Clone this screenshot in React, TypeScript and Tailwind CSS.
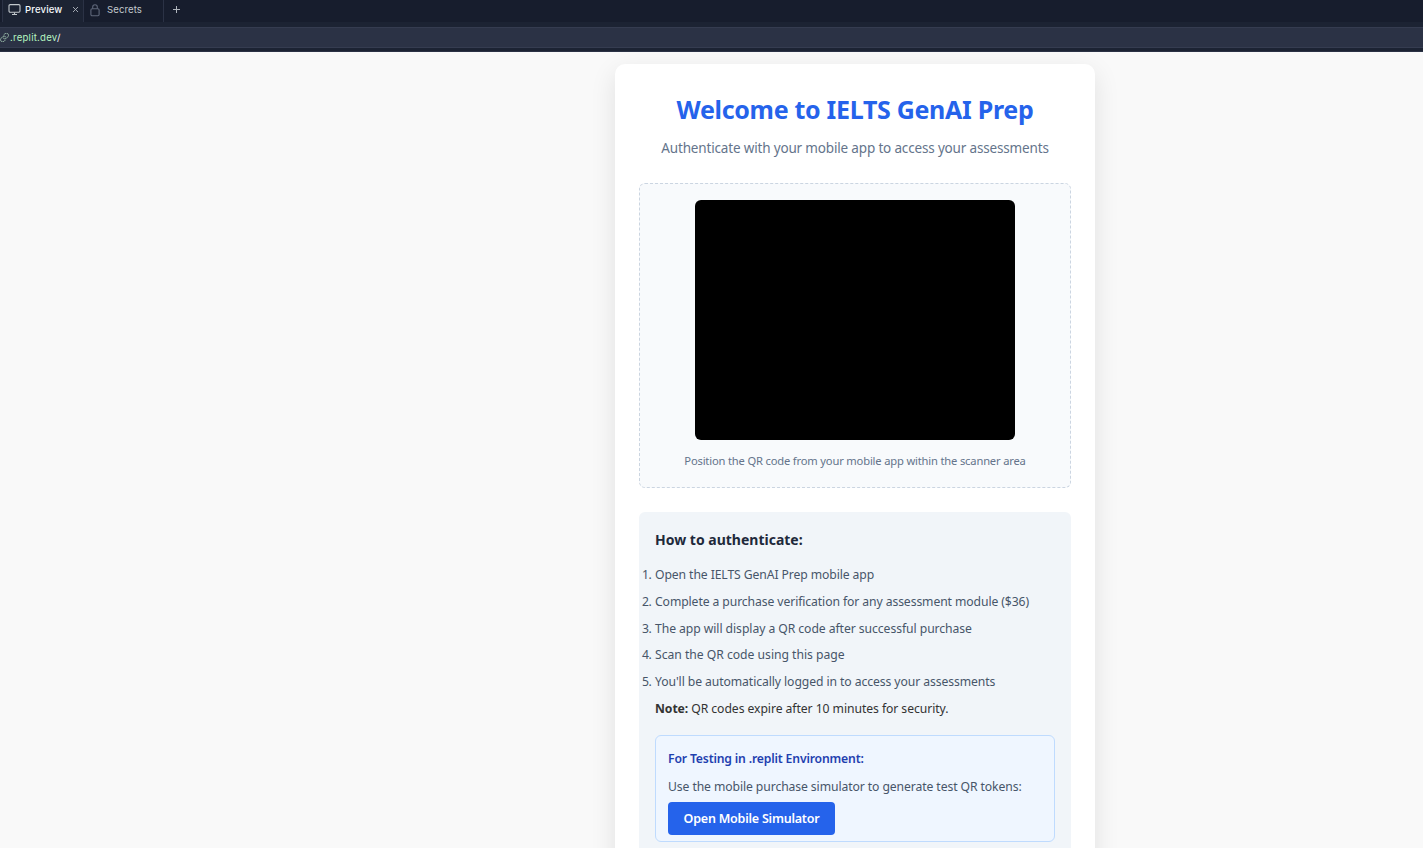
import React from "react";

const steps = [
  { text: "Open the IELTS GenAI Prep mobile app", tracking: "tracking-[-0.1px]" },
  { text: "Complete a purchase verification for any assessment module ($36)", tracking: "tracking-[-0.1px]" },
  { text: "The app will display a QR code after successful purchase", tracking: "tracking-[-0.07px]" },
  { text: "Scan the QR code using this page", tracking: "tracking-[-0.03px]" },
  { text: "You'll be automatically logged in to access your assessments", tracking: "tracking-[-0.09px]" },
];

function TabBar() {
  return (
    <div className="flex h-[22px] items-stretch bg-[#171d2d] pl-[2px] font-[Inter,'Liberation_Sans',sans-serif] text-[9.6px]">
      <div className="flex w-[82px] items-center border-x border-[#2b3245] bg-[#1c2333] pb-[2px] pl-[5px] text-[#f5f9fc]">
        <svg width="13" height="12" viewBox="0 0 13 12" fill="none" stroke="#c2c8cc" strokeWidth="1.1" className="shrink-0">
          <rect x="1" y="0.600" width="11" height="7.700" rx="1.2" />
          <path d="M6.5 8.5v2M4 10.5h5" />
        </svg>
        <span className="ml-[4px] w-[38px] font-medium tracking-[0.12px]">Preview</span>
        <svg width="7" height="7" viewBox="0 0 7 7" stroke="#b0b6bd" strokeWidth="0.9" className="ml-[9px] shrink-0 -translate-y-px">
          <path d="M1 1l5 5M6 1l-5 5" />
        </svg>
      </div>
      <div className="flex w-[80px] items-center border-r border-[#2b3245] pb-[2px] pl-[6px] text-[#c2c8cc]">
        <svg width="10" height="13" viewBox="0 0 10 13" fill="none" stroke="#5f677a" strokeWidth="1.1" className="shrink-0">
          <rect x="0.9" y="4.700" width="8.2" height="7" rx="1.2" />
          <path d="M2.7 4.700V3a2.3 2.3 0 0 1 4.6 0v1.700" />
        </svg>
        <span className="ml-[7px] tracking-[0.080px]">Secrets</span>
      </div>
      <div className="flex items-center pb-[3px] pl-[8px]">
        <svg width="9" height="9" viewBox="0 0 9 9" stroke="#b0b6bd" strokeWidth="1">
          <path d="M4.5 1v7M1 4.5h7" />
        </svg>
      </div>
    </div>
  );
}

function AddressBar() {
  return (
    <div className="h-[30px] bg-[#1c2333] pt-[5px]">
      <div className="flex h-[21px] items-center border-y border-[#353c50] bg-[#2b3245] font-[Inter,'Liberation_Sans',sans-serif] text-[9.6px] text-[#b5f5c0]">
        <svg width="9" height="9" viewBox="0 0 24 24" fill="none" stroke="#8fae9f" strokeWidth="2.6" strokeLinecap="round" className="shrink-0">
          <path d="M9 14a5.500 5.500 0 0 0 8 0l4-4a5.500 5.500 0 0 0-8-8l-3 3" />
          <path d="M15 10a5.500 5.500 0 0 0-8 0l-4 4a5.500 5.500 0 0 0 8 8l3-3" />
        </svg>
        <span className="ml-px pt-[2px] tracking-[0.23px]">.replit.dev<span className="text-[#f5f9fc]">/</span></span>
      </div>
      <div className="mt-[3px] h-px bg-[#2b3245]" />
    </div>
  );
}

export default function App() {
  return (
    <div className="flex h-[848px] w-[1423px] flex-col overflow-hidden bg-[#f9f9f9] font-['Noto_Sans','Open_Sans',sans-serif]">
      <div className="shrink-0">
        <TabBar />
        <AddressBar />
      </div>
      <div className="flex min-h-0 flex-1 justify-center overflow-hidden pl-[287px] pt-[12px]">
        <main className="h-[900px] w-[480px] shrink-0 rounded-[10px] bg-white px-6 pt-[23px] shadow-[0_8px_26px_rgba(0,0,0,0.1)]">
          <h1 className="h-[44px] whitespace-nowrap text-center text-[25px] font-bold leading-[44px] tracking-[-0.3px] text-[#2563eb]">
            Welcome to IELTS GenAI Prep
          </h1>
          <p className="mt-px h-[32px] whitespace-nowrap text-center text-[13.500px] leading-[32px] tracking-[-0.165px] text-[#64748b]">
            Authenticate with your mobile app to access your assessments
          </p>
          <section className="mt-[19px] flex h-[305px] flex-col items-center rounded-[6px] border border-dashed border-[#cbd5e1] bg-[#f8fafc] pt-[16px]">
            <div className="h-[240px] w-[320px] rounded-[6px] bg-black" />
            <p className="mt-[11px] whitespace-nowrap text-[11.200px] leading-5 tracking-[-0.18px] text-[#64748b]">
              Position the QR code from your mobile app within the scanner area
            </p>
          </section>
          <section className="mt-[24px] h-[400px] rounded-[6px] bg-[#f1f5f9] px-4 pt-[16px]">
            <h2 className="text-[14px] font-bold leading-[23px] text-[#1e293b]">How to authenticate:</h2>
            <ol className="-ml-[13px] mt-[11px] text-[12.200px] leading-[26.750px] text-[#475569]">
              {steps.map((step, index) => (
                <li key={step.text} className="flex whitespace-nowrap">
                  <span className="w-[13px] shrink-0 tracking-[-0.5px]">{index + 1}.</span>
                  <span className={step.tracking}>{step.text}</span>
                </li>
              ))}
            </ol>
            <p className="whitespace-nowrap text-[12.200px] leading-[26px] tracking-[-0.07px] text-[#333333]">
              <strong>Note:</strong> QR codes expire after 10 minutes for security.
            </p>
            <div className="mt-[13px] h-[107px] rounded-[6px] border border-[#bfdbfe] bg-[#eff6ff] px-[12px] pt-[12px]">
              <h3 className="whitespace-nowrap text-[12.200px] font-semibold leading-[21px] tracking-[-0.16px] text-[#1e40af]">
                For Testing in .replit Environment:
              </h3>
              <p className="mt-[7px] whitespace-nowrap text-[12.200px] leading-[22px] tracking-[-0.1px] text-[#475569]">
                Use the mobile purchase simulator to generate test QR tokens:
              </p>
              <button className="mt-[4px] flex h-[33px] w-[167px] items-center justify-center whitespace-nowrap rounded-[4px] bg-[#2563eb] pt-[2px] text-[12.500px] font-semibold tracking-[-0.22px] text-white">
                Open Mobile Simulator
              </button>
            </div>
          </section>
        </main>
      </div>
    </div>
  );
}
